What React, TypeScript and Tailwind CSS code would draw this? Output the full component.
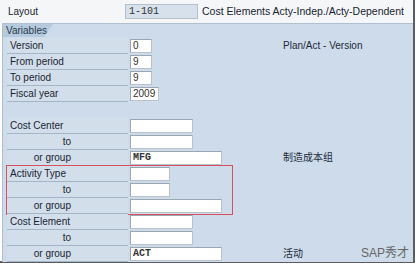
import React from "react";

type Row = {
  label?: string;
  sub?: boolean;
  value?: string;
  w?: string;
  mono?: boolean;
  note?: string;
};

const Field = ({ row }: { row: Row }) => (
  <div className="flex h-[16px] items-center">
    {row.label ? (
      <div className="h-[16px] w-[121px] shrink-0 border-b border-[#a3b6c9] bg-[#d2deea] flex items-center">
        {row.sub ? (
          <span className="w-[64px] text-right">{row.label}</span>
        ) : (
          <span className="pl-[3px]">{row.label}</span>
        )}
      </div>
    ) : (
      <div className="w-[121px] shrink-0" />
    )}
    <div className="ml-[2px] w-[153px] shrink-0">
      {row.w && (
        <div
          className={`h-[14px] ${row.w} border border-[#b9c3cc] border-t-[#9aa6b1] border-l-[#9aa6b1] bg-white flex items-center pl-[2px] text-[#333] ${
            row.mono ? "font-['Liberation_Mono',monospace] font-bold text-[10px]" : ""
          }`}
        >
          {row.value}
        </div>
      )}
    </div>
    {row.note && <span className="shrink-0 text-[#1d2a3a]">{row.note}</span>}
  </div>
);

const App = () => {
  const top: Row[] = [
    { label: "Version", value: "0", w: "w-[22px]", note: "Plan/Act - Version" },
    { label: "From period", value: "9", w: "w-[22px]" },
    { label: "To period", value: "9", w: "w-[22px]" },
    { label: "Fiscal year", value: "2009", w: "w-[29px]" },
    {},
    { label: "Cost Center", w: "w-[63px]" },
    { label: "to", sub: true, w: "w-[63px]" },
    { label: "or group", sub: true, value: "MFG", w: "w-[92px]", mono: true, note: "制造成本组" },
  ];
  const activity: Row[] = [
    { label: "Activity Type", w: "w-[40px]" },
    { label: "to", sub: true, w: "w-[40px]" },
    { label: "or group", sub: true, w: "w-[92px]" },
  ];
  const element: Row[] = [
    { label: "Cost Element", w: "w-[63px]" },
    { label: "to", sub: true, w: "w-[63px]" },
    { label: "or group", sub: true, value: "ACT", w: "w-[92px]", mono: true, note: "活动" },
  ];

  return (
    <div className="w-[417px] h-[267px] bg-white font-['Liberation_Sans','Noto_Sans_CJK_SC',sans-serif] text-[10px] text-[#1a2433] leading-none">
      <div className="w-[415px] h-[263px] border-r-2 border-b-2 border-[#5a5e63] flex flex-col">
        <div className="h-[23px] bg-[#f4f6f8] flex items-center shrink-0">
          <span className="pl-[8px] w-[125px]">Layout</span>
          <div className="w-[73px] h-[15px] bg-[#d6e1ec] border border-[#b3c1cf] flex items-center pl-[3px] font-['Liberation_Mono',monospace] text-[#333]">
            1-101
          </div>
          <span className="ml-[4px] text-[10.5px]">Cost Elements Acty-Indep./Acty-Dependent</span>
        </div>
        <div className="flex-1 ml-[2px] bg-[#cddbea] border-t border-l border-[#aebfd0]">
          <div className="h-[13px] w-[50px] bg-[#b6cadd] [clip-path:polygon(0_0,100%_0,82%_100%,0_100%)] pl-[3px] pt-[2px] text-[#2a3a4c]">
            Variables
          </div>
          <div className="pl-[4px] pt-[1px]">
            {top.map((r, i) => (
              <Field key={i} row={r} />
            ))}
            <div className="w-[225px] outline outline-1 outline-[#d6505f]">
              {activity.map((r, i) => (
                <Field key={i} row={r} />
              ))}
            </div>
            {element.map((r, i) => (
              <div key={i} className="relative">
                <Field row={r} />
                {i === 2 && (
                  <span className="absolute right-[4px] top-[1px] text-[12px] text-[#666]">SAP秀才</span>
                )}
              </div>
            ))}
          </div>
        </div>
      </div>
    </div>
  );
};

export default App;
